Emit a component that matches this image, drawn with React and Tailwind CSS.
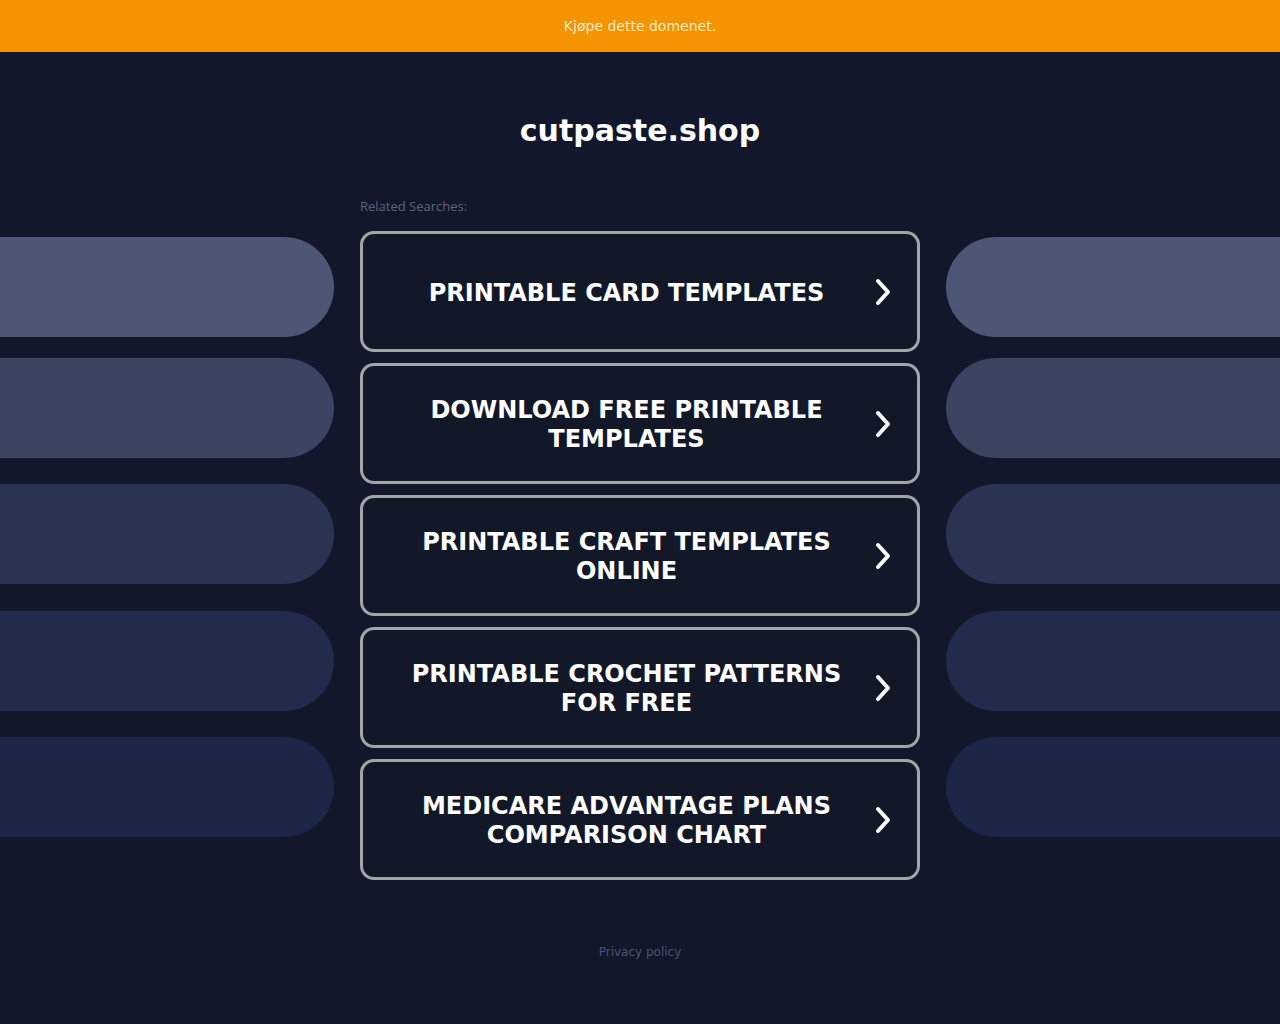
import React from 'react';

const SEARCHES = [
  'Printable Card Templates',
  'Download Free Printable Templates',
  'Printable Craft Templates Online',
  'Printable Crochet Patterns for Free',
  'Medicare Advantage Plans Comparison Chart',
];

// side pill rows: top margin + colour
const PILLS = [
  { mt: 'mt-0', bg: 'bg-[#4d5775]' },
  { mt: 'mt-[21px]', bg: 'bg-[#3b4461]' },
  { mt: 'mt-[26px]', bg: 'bg-[#2b3352]' },
  { mt: 'mt-[27px]', bg: 'bg-[#222b4b]' },
  { mt: 'mt-[26px]', bg: 'bg-[#1d2646]' },
];

const Chevron = () => (
  <svg width="18" height="28" viewBox="0 0 18 28" fill="none" className="shrink-0">
    <path d="M4 3 L14 14 L4 25" stroke="white" strokeWidth="4" strokeLinecap="round" strokeLinejoin="round" />
  </svg>
);

const SidePills = ({ side }) => (
  <div className="flex flex-col pt-[39px]">
    {PILLS.map((p, i) => (
      <div
        key={i}
        className={`${p.mt} ${p.bg} h-[100px] ${side === 'left' ? 'rounded-r-[50px]' : 'rounded-l-[50px]'}`}
      />
    ))}
  </div>
);

export default function App() {
  return (
    <div className="min-h-[1024px] bg-[#12172b] font-['DejaVu_Sans',sans-serif]">
      {/* top banner */}
      <div className="h-[52px] bg-[#f39400] flex items-center justify-center">
        <span className="text-[14px] text-[#fde9c9]">Kjøpe dette domenet.</span>
      </div>

      <h1 className="mt-[61px] text-center text-[30px] leading-[36px] font-bold text-white">cutpaste.shop</h1>

      <div className="mt-[49px] grid grid-cols-[334px_560px_334px] gap-x-[26px]">
        <SidePills side="left" />

        <div className="flex flex-col">
          <div className="text-[13px] leading-[17px] text-[#5d6580] font-['Open_Sans',sans-serif]">Related Searches:</div>
          <div className="mt-[16px] flex flex-col gap-[11px]">
            {SEARCHES.map((s) => (
              <div
                key={s}
                className="h-[121px] border-[3px] border-[#a3a5ab] rounded-[14px] bg-[#131829] flex items-center pl-[36px] pr-[25px]"
              >
                <div className="flex-1 pt-[3px] text-center text-white font-bold uppercase text-[24px] leading-[29px] px-[6px]">
                  {s}
                </div>
                <div className="ml-[20px] pt-[1px]">
                  <Chevron />
                </div>
              </div>
            ))}
          </div>
        </div>

        <SidePills side="right" />
      </div>

      <div className="mt-[64px] pb-[50px] text-center text-[12px] leading-[16px] text-[#4b5371]">Privacy policy</div>
    </div>
  );
}
